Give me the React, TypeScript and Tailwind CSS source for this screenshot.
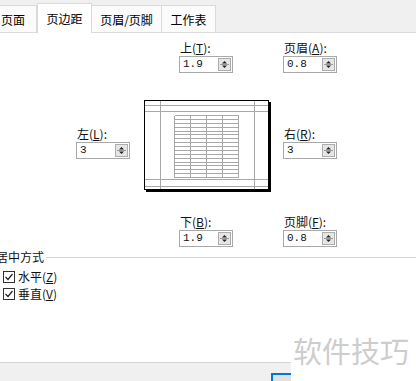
import React from 'react';

const Spinner = () => (
  <div className="w-[13px] h-[13px] border border-[#adadad] bg-[#e6e6e6] flex flex-col">
    <svg width="11" height="11" viewBox="0 0 11 11">
      <path d="M3 4.5 L5.5 2 L8 4.5 Z" fill="#222" />
      <line x1="1" y1="5.5" x2="10" y2="5.5" stroke="#9a9a9a" strokeWidth="1" />
      <path d="M3 6.5 L5.5 9 L8 6.5 Z" fill="#222" />
    </svg>
  </div>
);

const Field = ({ label, hot, value }: { label: string; hot: string; value: string }) => (
  <div className="flex flex-col w-[54px]">
    <div className="h-[14px] text-[12px] leading-[14px] whitespace-nowrap pl-[1px] text-[#111]">
      {label}(<span className="underline underline-offset-1">{hot}</span>):
    </div>
    <div className="mt-[1px] h-[17px] w-[54px] border border-[#a9a9a9] bg-white flex items-center justify-between pl-[3px] pr-[1px]">
      <span className="font-['Liberation_Mono',monospace] text-[11px] leading-none text-[#111]">{value}</span>
      <Spinner />
    </div>
  </div>
);

const Check = ({ label, hot }: { label: string; hot: string }) => (
  <div className="h-[17px] flex items-center pl-[3px]">
    <div className="w-[12px] h-[12px] border border-[#333] bg-white flex items-center justify-center">
      <svg width="10" height="10" viewBox="0 0 10 10">
        <path d="M1.5 5 L4 7.5 L8.5 2" fill="none" stroke="#222" strokeWidth="1.2" />
      </svg>
    </div>
    <span className="ml-[3px] text-[12px] leading-[14px] text-[#111]">
      {label}(<span className="underline underline-offset-1">{hot}</span>)
    </span>
  </div>
);

const PagePreview = () => {
  const rows = Array.from({ length: 17 }, (_, i) => 14 + (i * 62) / 16);
  const cols = [30, 46, 62, 78, 94];
  return (
    <div className="w-[125px] h-[90px] border border-black bg-white shadow-[2px_2px_0_#000]">
      <svg width="123" height="88" viewBox="0 0 123 88" className="block">
        <g stroke="#a8a8a8" strokeWidth="1" shapeRendering="crispEdges">
          <line x1="15.5" y1="0" x2="15.5" y2="88" />
          <line x1="109.5" y1="0" x2="109.5" y2="88" />
          <line x1="0" y1="4.5" x2="123" y2="4.5" />
          <line x1="0" y1="10.5" x2="123" y2="10.5" />
          <line x1="0" y1="78.5" x2="123" y2="78.5" />
          <line x1="0" y1="85.5" x2="123" y2="85.5" />
          {rows.map((y, i) => (
            <line key={'r' + i} x1={29.5} y1={Math.round(y) + 0.5} x2={93.5} y2={Math.round(y) + 0.5} />
          ))}
          {cols.map((x, i) => (
            <line key={'c' + i} x1={x - 0.5} y1={14.5} x2={x - 0.5} y2={76.5} />
          ))}
        </g>
      </svg>
    </div>
  );
};

export default function App() {
  return (
    <div className="w-[416px] h-[381px] relative overflow-hidden bg-white flex flex-col font-['Noto_Sans_CJK_SC',sans-serif]">
      {/* tabs */}
      <div className="h-[33px] bg-[#f0f0f0] flex items-end shrink-0">
        <div className="ml-[-11px] w-[48px] h-[28px] bg-[#fbfbfb] border border-[#dadada] flex items-center justify-center text-[12px] pt-[2px]">页面</div>
        <div className="w-[55px] h-[30px] bg-white border border-b-0 border-[#dadada] flex items-center justify-center text-[12px] pt-[1px]">页边距</div>
        <div className="w-[70px] h-[28px] bg-[#fbfbfb] border border-l-0 border-[#dadada] flex items-center justify-center text-[12px] pt-[2px]">页眉/页脚</div>
        <div className="w-[54px] h-[28px] bg-[#fbfbfb] border border-l-0 border-[#dadada] flex items-center justify-center text-[12px] pt-[2px]">工作表</div>
        <div className="flex-1 h-[28px] border-b border-[#dadada]" />
      </div>

      {/* content */}
      <div className="flex-1 flex flex-col">
        <div className="mt-[8px] ml-[179px] flex gap-[50px]">
          <Field label="上" hot="T" value="1.9" />
          <Field label="页眉" hot="A" value="0.8" />
        </div>

        <div className="mt-[27px] flex items-start">
          <div className="ml-[76px] mt-[27px]">
            <Field label="左" hot="L" value="3" />
          </div>
          <div className="ml-[14px]">
            <PagePreview />
          </div>
          <div className="ml-[14px] mt-[27px]">
            <Field label="右" hot="R" value="3" />
          </div>
        </div>

        <div className="mt-[25px] ml-[179px] flex gap-[50px]">
          <Field label="下" hot="B" value="1.9" />
          <Field label="页脚" hot="F" value="0.8" />
        </div>

        <div className="mt-[3px] h-[14px] flex items-center">
          <span className="ml-[-4px] text-[12px] leading-[14px] text-[#111] whitespace-nowrap">居中方式</span>
          <div className="ml-[2px] flex-1 h-px bg-[#d5d5d5]" />
        </div>

        <div className="mt-[4px] flex flex-col">
          <Check label="水平" hot="Z" />
          <Check label="垂直" hot="V" />
        </div>
      </div>

      {/* footer */}
      <div className="h-[19px] shrink-0 bg-[#f0f0f0] border-t border-[#d5d5d5] pt-[10px]">
        <div className="ml-[271px] w-[75px] h-[23px] border-2 border-[#0078d7] bg-[#e1e1e1]" />
      </div>

      {/* watermark */}
      <div className="absolute right-0 bottom-0 w-[125px] h-[50px] bg-white pl-[2px] pt-[2px]">
        <span className="text-[29px] leading-[34px] text-[#cdcdcd] whitespace-nowrap">软件技巧</span>
      </div>
    </div>
  );
}
